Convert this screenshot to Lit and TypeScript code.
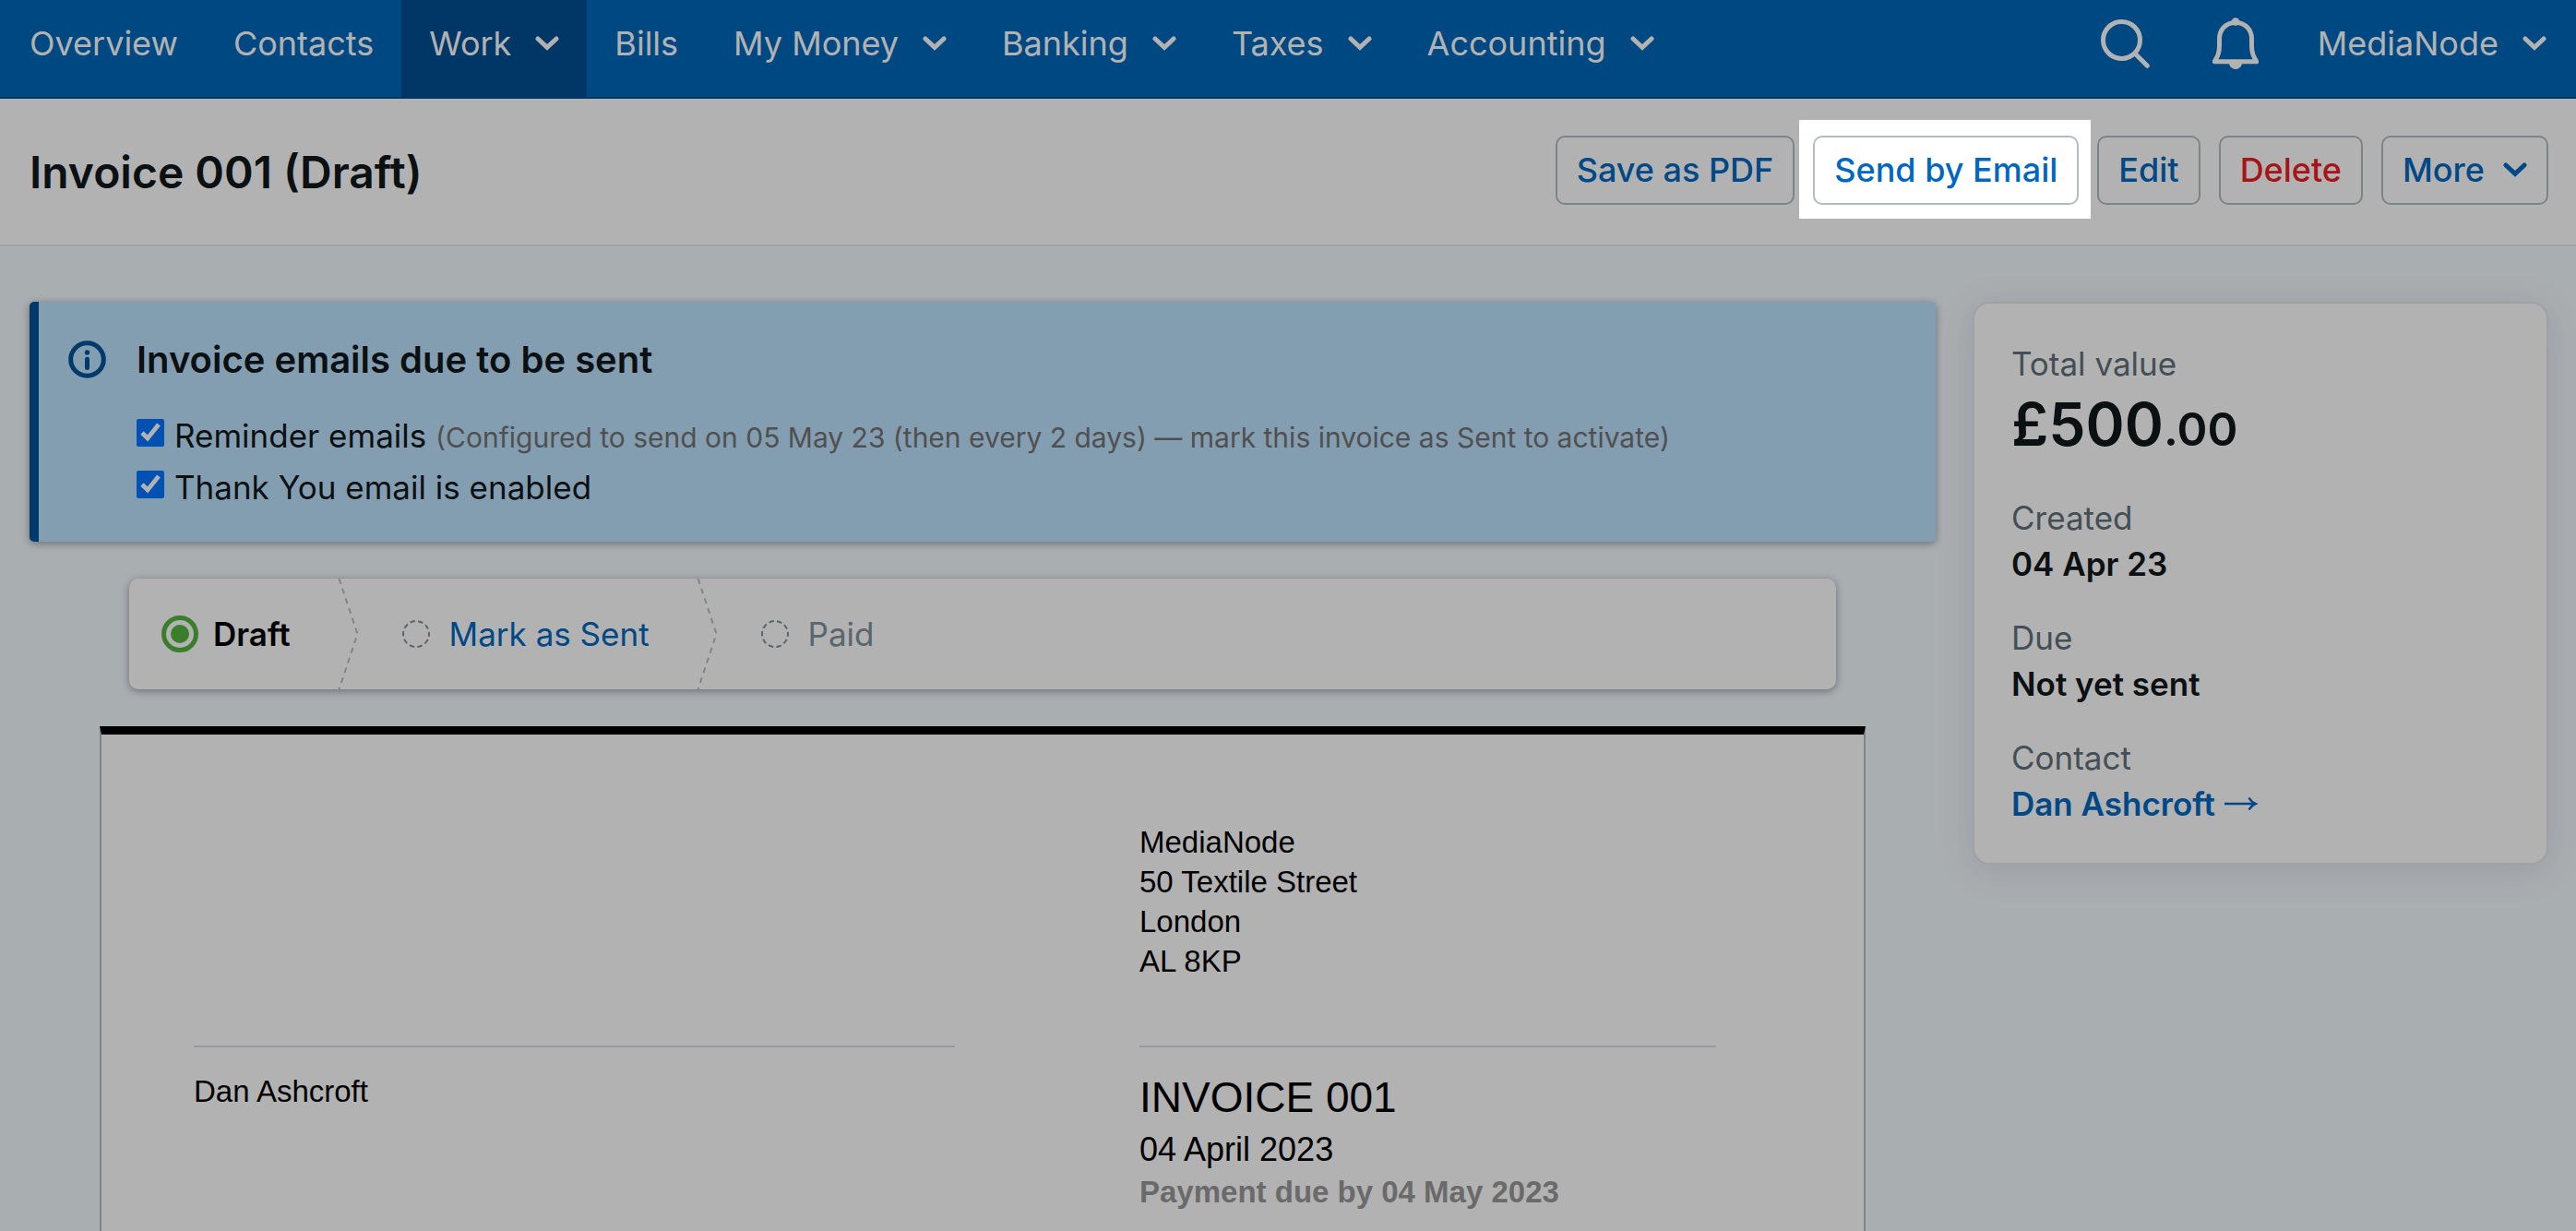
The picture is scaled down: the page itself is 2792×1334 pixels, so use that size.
import { LitElement, html, css } from "lit";
import { customElement } from "lit/decorators.js";
import { classMap } from "lit/directives/class-map.js";

interface NavEntry {
  label: string;
  menu?: boolean;
  active?: boolean;
}

const NAV: NavEntry[] = [
  { label: "Overview" },
  { label: "Contacts" },
  { label: "Work", menu: true, active: true },
  { label: "Bills" },
  { label: "My Money", menu: true },
  { label: "Banking", menu: true },
  { label: "Taxes", menu: true },
  { label: "Accounting", menu: true },
];

const chevron = html`<svg width="26" height="16" viewBox="0 0 26 16" aria-hidden="true">
  <path d="M3 3 L13 12.4 L23 3" fill="none" stroke="currentColor" stroke-width="5" stroke-linecap="round" />
</svg>`;

@customElement("top-nav")
export class TopNav extends LitElement {
  static styles = css`
    :host {
      display: block;
    }
    .bar {
      display: flex;
      justify-content: space-between;
      height: 105px;
      padding: 0 2px;
      background: #0067bb;
      border-bottom: 2px solid #005092;
    }
    .group {
      display: flex;
    }
    .item {
      display: flex;
      align-items: center;
      gap: 26px;
      padding: 0 30px 11px;
      border: 0;
      background: none;
      color: #fff;
      font: 400 36px/48px Inter, "Liberation Sans", sans-serif;
      text-decoration: none;
      white-space: nowrap;
      cursor: pointer;
    }
    .active {
      background: #005092;
    }
    .tool {
      padding: 0 34px 11px;
    }
    .tool svg,
    .item svg {
      display: block;
      flex: none;
    }
  `;

  render() {
    return html`<nav class="bar" aria-label="Main">
      <div class="group">
        ${NAV.map((n) =>
          n.menu
            ? html`<button type="button" class=${classMap({ item: true, active: !!n.active })} aria-haspopup="true">
                ${n.label}${chevron}
              </button>`
            : html`<a class="item" href="#">${n.label}</a>`
        )}
      </div>
      <div class="group">
        <button type="button" class="item tool" aria-label="Search">
          <svg width="53" height="53" viewBox="0 0 53 53" fill="none" stroke="currentColor" stroke-width="5">
            <circle cx="22.5" cy="22.5" r="20" />
            <path d="M37.5 37.5 L50.3 50.3" stroke-linecap="round" />
          </svg>
        </button>
        <button type="button" class="item tool" aria-label="Notifications">
          <svg width="50" height="56" viewBox="0 0 50 56">
            <path
              d="M25 5.5 C14.5 5.5 7.5 13 7.5 23 V31 C7.5 38.5 5.5 42 2.3 47.7 H47.7 C44.5 42 42.5 38.5 42.5 31 V23 C42.5 13 35.5 5.5 25 5.5 Z"
              fill="none" stroke="currentColor" stroke-width="5" stroke-linejoin="round"
            />
            <circle cx="25" cy="4.5" r="4.3" fill="currentColor" />
            <path d="M18 49 A7 7 0 0 0 32 49 Z" fill="currentColor" />
          </svg>
        </button>
        <button type="button" class="item" aria-haspopup="true">MediaNode${chevron}</button>
      </div>
    </nav>`;
  }
}

@customElement("page-header")
export class PageHeader extends LitElement {
  static styles = css`
    :host {
      display: block;
    }
    .head {
      display: flex;
      align-items: center;
      justify-content: space-between;
      height: 158px;
      padding: 0 30px 0 32px;
      background: #fff;
      border-bottom: 2px solid #e5e6ed;
      font-family: Inter, "Liberation Sans", sans-serif;
    }
    .title {
      margin: 0;
      padding-top: 2px;
      color: #11181a;
      font-size: 48px;
      font-weight: 600;
      line-height: 56px;
      white-space: nowrap;
    }
    .actions {
      display: flex;
      gap: 20px;
      padding-bottom: 3px;
    }
    .btn {
      display: flex;
      align-items: center;
      gap: 20px;
      height: 75px;
      padding: 0 21px 2px;
      border: 2px solid #b0bdc2;
      border-radius: 10px;
      background: #fff;
      color: #0067c0;
      font: 500 36px/48px Inter, "Liberation Sans", sans-serif;
      white-space: nowrap;
      cursor: pointer;
    }
    .danger {
      color: #f01d22;
    }
    .spotlight {
      position: relative;
      z-index: 10;
    }
    .spotlight .btn {
      position: relative;
    }
    .spotlight::before {
      content: "";
      position: absolute;
      inset: -17px -13px -15px -15px;
      background: #fff;
      box-shadow: 0 0 0 4000px rgba(0, 0, 0, 0.3);
      pointer-events: none;
    }
  `;

  render() {
    return html`<header class="head">
      <h1 class="title">Invoice 001 (Draft)</h1>
      <div class="actions">
        <button type="button" class="btn">Save as PDF</button>
        <div class="spotlight"><button type="button" class="btn">Send by Email</button></div>
        <button type="button" class="btn">Edit</button>
        <button type="button" class="btn danger">Delete</button>
        <button type="button" class="btn" aria-haspopup="true">More${chevron}</button>
      </div>
    </header>`;
  }
}

@customElement("email-notice")
export class EmailNotice extends LitElement {
  static styles = css`
    :host {
      display: block;
    }
    .notice {
      display: flex;
      gap: 33px;
      padding: 33px 32px 31px;
      border-left: 10px solid #00549a;
      border-radius: 5px;
      background: #bde2fe;
      box-shadow: 0 2px 8px rgba(20, 20, 40, 0.4);
      color: #11181a;
      font-family: Inter, "Liberation Sans", sans-serif;
    }
    .icon {
      flex: none;
      margin-top: 9px;
      color: #00549a;
    }
    .heading {
      margin: 0 0 24px;
      font-size: 40px;
      font-weight: 600;
      line-height: 60px;
    }
    .row {
      display: flex;
      align-items: baseline;
      gap: 11px;
      height: 56px;
      font-size: 35px;
      line-height: 56px;
      white-space: nowrap;
    }
    .box {
      align-self: flex-start;
      width: 30px;
      height: 30px;
      margin: 10px 0 0;
    }
    .hint {
      color: #737373;
      font-size: 30px;
    }
  `;

  render() {
    return html`<section class="notice">
      <svg class="icon" width="41" height="41" viewBox="0 0 41 41" aria-hidden="true">
        <circle cx="20.5" cy="20.5" r="17.8" fill="none" stroke="currentColor" stroke-width="5" />
        <circle cx="20.5" cy="13" r="2.7" fill="currentColor" />
        <path d="M20.5 20.3 V29.5" stroke="currentColor" stroke-width="5" stroke-linecap="round" />
      </svg>
      <div>
        <h2 class="heading">Invoice emails due to be sent</h2>
        <div class="row">
          <input class="box" id="reminder" type="checkbox" checked />
          <label for="reminder"
            >Reminder emails
            <span class="hint"
              >(Configured to send on 05 May 23 (then every 2 days) — mark this invoice as Sent to activate)</span
            ></label
          >
        </div>
        <div class="row">
          <input class="box" id="thanks" type="checkbox" checked />
          <label for="thanks">Thank You email is enabled</label>
        </div>
      </div>
    </section>`;
  }
}

@customElement("status-steps")
export class StatusSteps extends LitElement {
  static styles = css`
    :host {
      display: block;
    }
    .steps {
      display: flex;
      align-items: center;
      height: 120px;
      margin: 0;
      padding: 0 35px;
      list-style: none;
      border-radius: 10px;
      background: #fff;
      box-shadow: 0 2px 8px rgba(20, 20, 40, 0.4);
      font: 400 35px/48px Inter, "Liberation Sans", sans-serif;
    }
    .step {
      display: flex;
      align-items: center;
      gap: 16px;
    }
    .later {
      gap: 21px;
    }
    .current {
      color: #000;
      font-weight: 600;
    }
    .link {
      color: #0067c0;
      text-decoration: none;
    }
    .muted {
      color: #80929a;
    }
    .sep {
      display: block;
      margin: 0 46px 0 51px;
    }
    .icon {
      display: block;
      flex: none;
    }
  `;

  private todo = html`<svg class="icon" width="30" height="30" viewBox="0 0 30 30" aria-hidden="true">
    <circle cx="15" cy="15" r="14" fill="none" stroke="#81929c" stroke-width="2" stroke-dasharray="5.5 3.3" stroke-dashoffset="2.7" />
  </svg>`;

  private sep = html`<svg class="sep" width="24" height="120" viewBox="0 0 24 120" aria-hidden="true">
    <path d="M1.5 0 L21.5 60 L1.5 120" fill="none" stroke="#b5c0c3" stroke-width="2" stroke-dasharray="6 5.3" />
  </svg>`;

  render() {
    return html`<ol class="steps">
      <li class="step current" aria-current="step">
        <svg class="icon" width="40" height="40" viewBox="0 0 40 40" aria-hidden="true">
          <circle cx="20" cy="20" r="17.5" fill="none" stroke="#53b53f" stroke-width="5" />
          <circle cx="20" cy="20" r="10" fill="#53b53f" />
        </svg>
        Draft
      </li>
      <li class="step" role="presentation">${this.sep}</li>
      <li class="step later">${this.todo}<a class="link" href="#">Mark as Sent</a></li>
      <li class="step" role="presentation">${this.sep}</li>
      <li class="step later muted">${this.todo}Paid</li>
    </ol>`;
  }
}

@customElement("invoice-paper")
export class InvoicePaper extends LitElement {
  static styles = css`
    :host {
      display: block;
    }
    .paper {
      box-sizing: border-box;
      height: 100%;
      display: grid;
      grid-template-columns: minmax(0, 825fr) minmax(0, 625fr);
      grid-template-rows: auto 1fr;
      column-gap: 200px;
      padding: 95px 160px 0 100px;
      border: 2px solid #b7c0c4;
      border-width: 9px 2px 0;
      border-top-color: #000;
      background: #fff;
      color: #000;
      font: 400 33px/43px "Liberation Sans", Arial, sans-serif;
    }
    .from {
      grid-column: 2;
      padding-bottom: 70px;
      font-style: normal;
    }
    .cell {
      border-top: 2px solid #d8e0e7;
      padding-top: 26px;
    }
    .number {
      margin: 0;
      font-size: 46px;
      font-weight: 400;
      line-height: 56px;
    }
    .date {
      font-size: 36px;
      line-height: 48px;
      padding-top: 5px;
    }
    .due {
      color: #999;
      font-weight: 700;
    }
  `;

  render() {
    return html`<article class="paper">
      <address class="from">MediaNode<br />50 Textile Street<br />London<br />AL 8KP</address>
      <div class="cell">Dan Ashcroft</div>
      <div class="cell">
        <h2 class="number">INVOICE 001</h2>
        <div class="date">04 April 2023</div>
        <div class="due">Payment due by 04 May 2023</div>
      </div>
    </article>`;
  }
}

@customElement("invoice-summary")
export class InvoiceSummary extends LitElement {
  static styles = css`
    :host {
      display: block;
    }
    .card {
      display: flex;
      flex-direction: column;
      gap: 30px;
      margin: 0;
      padding: 40px 40px 39px;
      border: 2px solid #e5e6ed;
      border-radius: 18px;
      background: #fff;
      box-shadow: 0 6px 40px rgba(60, 60, 120, 0.12);
      font: 400 35px/50px Inter, "Liberation Sans", sans-serif;
    }
    .label {
      color: #61717a;
    }
    .value {
      margin: 0;
      color: #11181a;
      font-weight: 600;
    }
    .total {
      font-size: 64px;
      line-height: 82px;
    }
    .pence {
      font-size: 50px;
    }
    .link {
      display: inline-flex;
      align-items: center;
      gap: 10px;
      color: #0067c0;
      text-decoration: none;
    }
  `;

  render() {
    return html`<dl class="card">
      <div>
        <dt class="label">Total value</dt>
        <dd class="value total">£500<span class="pence">.00</span></dd>
      </div>
      <div>
        <dt class="label">Created</dt>
        <dd class="value">04 Apr 23</dd>
      </div>
      <div>
        <dt class="label">Due</dt>
        <dd class="value">Not yet sent</dd>
      </div>
      <div>
        <dt class="label">Contact</dt>
        <dd class="value">
          <a class="link" href="#"
            >Dan Ashcroft<svg width="36" height="16" viewBox="0 0 36 16" aria-hidden="true">
              <path
                d="M0 8 H34 M26.5 1.5 Q29 6 34 8 Q29 10 26.5 14.5"
                fill="none" stroke="currentColor" stroke-width="2.4"
              />
            </svg>
          </a>
        </dd>
      </div>
    </dl>`;
  }
}

@customElement("app-root")
export class AppRoot extends LitElement {
  static styles = css`
    :host {
      display: flex;
      flex-direction: column;
      height: 100vh;
      overflow: hidden;
      background: #f3f9fd;
    }
    .content {
      flex: 1;
      display: grid;
      grid-template-columns: minmax(0, 1fr) 624px;
      gap: 40px;
      padding: 60px 30px 0 32px;
    }
    .main {
      display: flex;
      flex-direction: column;
    }
    .steps {
      margin: 40px 108px;
    }
    .paper {
      flex: 1;
      margin: 0 76px;
    }
    .side {
      align-self: start;
    }
  `;

  render() {
    return html`<top-nav></top-nav>
      <page-header></page-header>
      <div class="content">
        <main class="main">
          <email-notice></email-notice>
          <status-steps class="steps"></status-steps>
          <invoice-paper class="paper"></invoice-paper>
        </main>
        <aside class="side"><invoice-summary></invoice-summary></aside>
      </div>`;
  }
}
